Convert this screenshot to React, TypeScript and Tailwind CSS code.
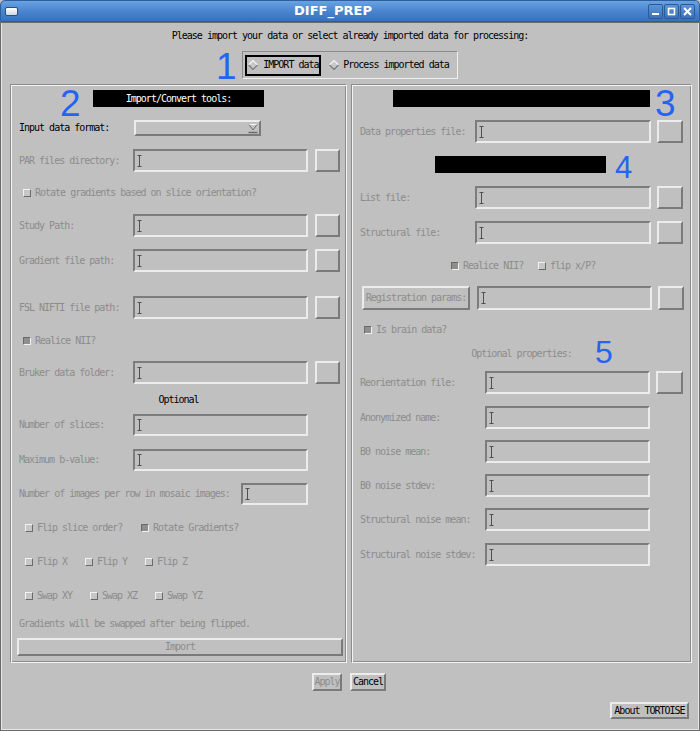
import React from "react";

const mono = "font-['DejaVu_Sans_Mono',monospace] text-[10px] tracking-[-1px] leading-[12px] whitespace-nowrap";
const dim = "text-[#8c8c8c]";

function Caret() {
  return (
    <svg width="5" height="12" viewBox="0 0 5 12" className="shrink-0">
      <path d="M0.5 0.5h4M2.5 0.5v11M0.5 11.5h4" stroke="#505050" strokeWidth="1" fill="none" />
    </svg>
  );
}

function Sunken({ className }: { className: string }) {
  return (
    <div
      className={`h-full shrink-0 border-2 border-t-[#7c7c7c] border-l-[#7c7c7c] border-b-[#ececec] border-r-[#ececec] flex items-center pl-[2px] ${className}`}
    >
      <Caret />
    </div>
  );
}

function Raised({ className, children }: { className: string; children?: React.ReactNode }) {
  return (
    <div
      className={`shrink-0 border-2 border-t-[#ececec] border-l-[#ececec] border-b-[#7a7a7a] border-r-[#7a7a7a] flex items-center justify-center ${className}`}
    >
      {children}
    </div>
  );
}

function Check({ on }: { on?: boolean }) {
  return on ? (
    <div className="w-[8px] h-[8px] shrink-0 bg-[#8e8e8e] border border-t-[#6a6a6a] border-l-[#6a6a6a] border-b-[#f2f2f2] border-r-[#f2f2f2]" />
  ) : (
    <div className="w-[8px] h-[8px] shrink-0 bg-[#c6c6c6] border border-t-[#f2f2f2] border-l-[#f2f2f2] border-b-[#6a6a6a] border-r-[#6a6a6a]" />
  );
}

function CheckItem({ label, on, w }: { label: string; on?: boolean; w: string }) {
  return (
    <div className={`flex items-center gap-[4px] ${w}`}>
      <Check on={on} />
      <span className={dim}>{label}</span>
    </div>
  );
}

function Diamond() {
  return (
    <svg width="10" height="10" viewBox="0 0 10 10" className="shrink-0">
      <polygon points="5,0.5 9.5,5 5,9.5 0.5,5" fill="#c8c8c8" />
      <path d="M0.5 5L5 0.5L9.5 5" stroke="#f4f4f4" strokeWidth="1.2" fill="none" />
      <path d="M0.5 5L5 9.5L9.5 5" stroke="#7a7a7a" strokeWidth="1.2" fill="none" />
    </svg>
  );
}

function FieldRow({
  label,
  mt,
  labelW,
  inputW,
  btn,
  h = "h-[23px]",
  gap = "ml-[7px]",
}: {
  label: string;
  mt: string;
  labelW: string;
  inputW: string;
  btn?: string;
  h?: string;
  gap?: string;
}) {
  return (
    <div className={`flex items-center ${h} ${mt}`}>
      <span className={`${labelW} shrink-0 ${dim}`}>{label}</span>
      <Sunken className={inputW} />
      {btn && <Raised className={`h-full ${btn} ${gap}`} />}
    </div>
  );
}

const panel =
  "border border-t-[#8c8c8c] border-l-[#8c8c8c] border-b-[#f4f4f4] border-r-[#f4f4f4] shadow-[inset_1px_1px_0_#f4f4f4,inset_-1px_-1px_0_#8c8c8c] h-[579px] flex flex-col pl-[8px]";

const num = "absolute font-['Liberation_Sans',sans-serif] leading-none text-[#2464f0]";

export default function App() {
  return (
    <div className={`relative w-[700px] h-[731px] bg-[#c0c0c0] flex flex-col text-black ${mono}`}>
      {/* title bar */}
      <div className="h-[22px] shrink-0 rounded-t-[5px] bg-gradient-to-b from-[#6aa2e2] via-[#4a85cf] to-[#3a70ba] border border-[#2d5f9e] flex items-center px-[4px]">
        <div className="w-[13px] h-[9px] rounded-[2px] bg-gradient-to-b from-white to-[#d0d8e4] border border-[#2a4f80]" />
        <div className="flex-1 text-center font-['DejaVu_Sans',sans-serif] font-bold text-[13px] tracking-normal text-white">
          DIFF_PREP
        </div>
        <div className="flex gap-[1px]">
          {["min", "max", "close"].map((k) => (
            <div
              key={k}
              className="w-[15px] h-[15px] rounded-[2px] border border-[#2a5a98] bg-gradient-to-b from-[#5d95d8] to-[#3b71bb] flex items-center justify-center"
            >
              <svg width="9" height="9" viewBox="0 0 9 9">
                {k === "min" && <rect x="1" y="6" width="7" height="2" fill="white" />}
                {k === "max" && <rect x="1.5" y="1.5" width="6" height="6" stroke="white" strokeWidth="1.6" fill="none" />}
                {k === "close" && <path d="M1 1L8 8M8 1L1 8" stroke="white" strokeWidth="2" />}
              </svg>
            </div>
          ))}
        </div>
      </div>

      <div className="flex-1 flex flex-col border-x-2 border-b-2 border-x-[#e6e6e6] border-b-[#e6e6e6] outline outline-[#6a6a6a] -outline-offset-1">
        <div className="mt-[8px] h-[12px] text-center">
          Please import your data or select already imported data for processing:
        </div>

        <div className="mt-[9px] flex justify-center">
          <div className="h-[28px] flex items-center pl-[2px] pr-[8px] border border-t-[#8c8c8c] border-l-[#8c8c8c] border-b-[#f0f0f0] border-r-[#f0f0f0]">
            <div className="h-[21px] w-[76px] border-2 border-black flex items-center pl-[1px] gap-[5px]">
              <Diamond />
              <span>IMPORT data</span>
            </div>
            <div className="flex items-center ml-[8px] gap-[4px]">
              <Diamond />
              <span>Process imported data</span>
            </div>
          </div>
        </div>

        <div className="mt-[5px] flex pl-[8px] gap-[4px]">
          {/* left panel */}
          <div className={`w-[337px] ${panel}`}>
            <div className="mt-[5px] h-[17px] w-[171px] self-center -ml-[8px] bg-black text-white flex items-center justify-center">
              Import/Convert tools:
            </div>
            <div className="flex items-center h-[16px] mt-[13px]">
              <span className="w-[115px] shrink-0">Input data format:</span>
              <Raised className="w-[127px] h-full justify-end pr-[1px]">
                <svg width="10" height="11" viewBox="0 0 10 11">
                  <path d="M1 1.5h8L5 7z" fill="#c4c4c4" />
                  <path d="M1 1.5h8" stroke="#f4f4f4" />
                  <path d="M9 1.5L5 7L1 1.5" stroke="#6c6c6c" fill="none" />
                  <path d="M0.5 9.5h9" stroke="#6c6c6c" strokeWidth="1.5" />
                </svg>
              </Raised>
            </div>
            <FieldRow label="PAR files directory:" mt="mt-[13px]" labelW="w-[114px]" inputW="w-[175px]" btn="w-[25px]" />
            <div className="flex items-center h-[12px] mt-[15px] pl-[4px]">
              <CheckItem label="Rotate gradients based on slice orientation?" w="w-auto" />
            </div>
            <FieldRow label="Study Path:" mt="mt-[15px]" labelW="w-[114px]" inputW="w-[175px]" btn="w-[25px]" />
            <FieldRow label="Gradient file path:" mt="mt-[12px]" labelW="w-[114px]" inputW="w-[175px]" btn="w-[25px]" />
            <FieldRow label="FSL NIFTI file path:" mt="mt-[24px]" labelW="w-[114px]" inputW="w-[175px]" btn="w-[25px]" />
            <div className="flex items-center h-[12px] mt-[16px] pl-[4px]">
              <CheckItem label="Realice NII?" on w="w-auto" />
            </div>
            <FieldRow label="Bruker data folder:" mt="mt-[14px]" labelW="w-[114px]" inputW="w-[175px]" btn="w-[25px]" />
            <div className="mt-[10px] h-[12px] -ml-[8px] text-center">Optional</div>
            <FieldRow label="Number of slices:" mt="mt-[8px]" h="h-[22px]" labelW="w-[114px]" inputW="w-[175px]" />
            <FieldRow label="Maximum b-value:" mt="mt-[13px]" h="h-[22px]" labelW="w-[114px]" inputW="w-[175px]" />
            <FieldRow label="Number of images per row in mosaic images:" mt="mt-[12px]" h="h-[22px]" labelW="w-[222px]" inputW="w-[67px]" />
            <div className="flex items-center h-[12px] mt-[17px] pl-[6px]">
              <CheckItem label="Flip slice order?" w="w-[116px]" />
              <CheckItem label="Rotate Gradients?" on w="w-auto" />
            </div>
            <div className="flex items-center h-[12px] mt-[22px] pl-[6px]">
              <CheckItem label="Flip X" w="w-[60px]" />
              <CheckItem label="Flip Y" w="w-[60px]" />
              <CheckItem label="Flip Z" w="w-[60px]" />
            </div>
            <div className="flex items-center h-[12px] mt-[22px] pl-[6px]">
              <CheckItem label="Swap XY" w="w-[65px]" />
              <CheckItem label="Swap XZ" w="w-[65px]" />
              <CheckItem label="Swap YZ" w="w-[65px]" />
            </div>
            <div className={`mt-[16px] h-[12px] ${dim}`}>Gradients will be swapped after being flipped.</div>
            <Raised className={`mt-[8px] h-[18px] w-[326px] -ml-[2px] ${dim}`}>Import</Raised>
          </div>

          {/* right panel */}
          <div className={`w-[341px] ${panel}`}>
            <div className="mt-[5px] h-[17px] w-[257px] self-center -ml-[8px] bg-black" />
            <FieldRow label="Data properties file:" mt="mt-[13px]" labelW="w-[115px]" inputW="w-[176px]" btn="w-[26px]" gap="ml-[6px]" />
            <div className="mt-[13px] h-[17px] w-[171px] self-center -ml-[10px] bg-black" />
            <FieldRow label="List file:" mt="mt-[13px]" labelW="w-[115px]" inputW="w-[176px]" btn="w-[26px]" gap="ml-[6px]" />
            <FieldRow label="Structural file:" mt="mt-[12px]" labelW="w-[115px]" inputW="w-[176px]" btn="w-[26px]" gap="ml-[6px]" />
            <div className="flex items-center h-[12px] mt-[16px] pl-[91px]">
              <CheckItem label="Realice NII?" on w="w-[87px]" />
              <CheckItem label="flip x/P?" w="w-auto" />
            </div>
            <div className="flex items-center h-[24px] mt-[14px]">
              <Raised className={`h-full w-[108px] ml-[2px] ${dim}`}>Registration params:</Raised>
              <Sunken className="w-[175px] ml-[7px]" />
              <Raised className="h-full w-[26px] ml-[6px]" />
            </div>
            <div className="flex items-center h-[12px] mt-[14px] pl-[4px]">
              <CheckItem label="Is brain data?" on w="w-auto" />
            </div>
            <div className={`mt-[12px] h-[12px] -ml-[8px] text-center ${dim}`}>Optional properties:</div>
            <FieldRow label="Reorientation file:" mt="mt-[11px]" labelW="w-[125px]" inputW="w-[165px]" btn="w-[27px]" gap="ml-[6px]" />
            <FieldRow label="Anonymized name:" mt="mt-[12px]" labelW="w-[125px]" inputW="w-[165px]" />
            <FieldRow label="B0 noise mean:" mt="mt-[11px]" labelW="w-[125px]" inputW="w-[165px]" />
            <FieldRow label="B0 noise stdev:" mt="mt-[11px]" labelW="w-[125px]" inputW="w-[165px]" />
            <FieldRow label="Structural noise mean:" mt="mt-[11px]" labelW="w-[125px]" inputW="w-[165px]" />
            <FieldRow label="Structural noise stdev:" mt="mt-[12px]" labelW="w-[125px]" inputW="w-[165px]" />
          </div>
        </div>

        <div className="mt-[10px] flex justify-center gap-[8px] -ml-[2px]">
          <Raised className={`h-[18px] w-[30px] ${dim}`}>Apply</Raised>
          <Raised className="h-[18px] w-[36px]">Cancel</Raised>
        </div>
        <div className="mt-[11px] flex justify-end pr-[9px]">
          <Raised className="h-[17px] w-[79px]">About TORTOISE</Raised>
        </div>
      </div>

      {/* annotation numbers */}
      <span className={`${num} text-[37px] left-[216px] top-[48px]`}>1</span>
      <span className={`${num} text-[37px] left-[60px] top-[85px]`}>2</span>
      <span className={`${num} text-[37px] left-[655px] top-[85px]`}>3</span>
      <span className={`${num} text-[31px] left-[615px] top-[152px]`}>4</span>
      <span className={`${num} text-[32px] left-[595px] top-[336px]`}>5</span>
    </div>
  );
}
